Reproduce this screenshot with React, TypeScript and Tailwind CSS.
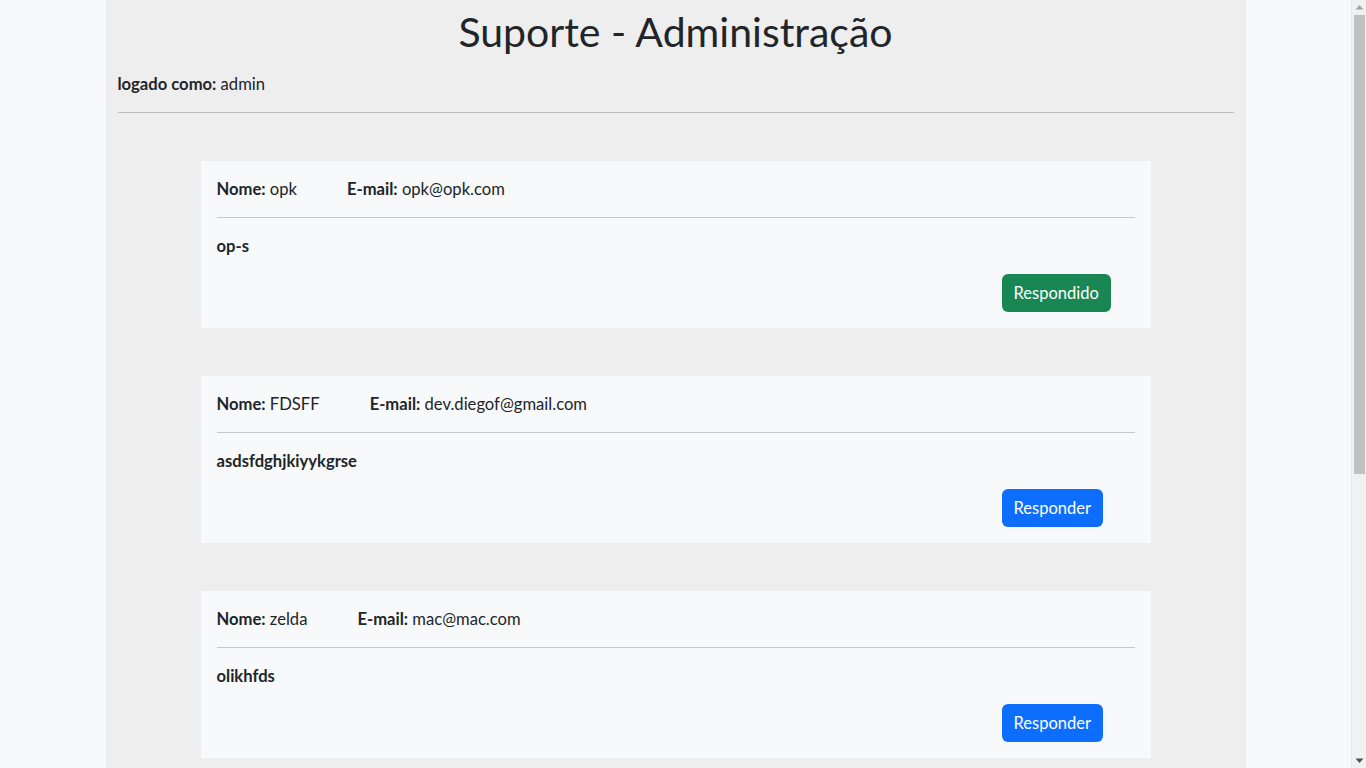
import React from "react";

type Ticket = { nome: string; email: string; msg: string; respondido: boolean };

const tickets: Ticket[] = [
  { nome: "opk", email: "opk@opk.com", msg: "op-s", respondido: true },
  { nome: "FDSFF", email: "dev.diegof@gmail.com", msg: "asdsfdghjkiyykgrse", respondido: false },
  { nome: "zelda", email: "mac@mac.com", msg: "olikhfds", respondido: false },
];

function Card({ t }: { t: Ticket }) {
  return (
    <div className="bg-[#f8f9fa] p-4 mb-12">
      <div className="flex gap-[50px] leading-6">
        <span>
          <b className="font-bold">Nome:</b> {t.nome}
        </span>
        <span>
          <b className="font-bold">E-mail:</b> {t.email}
        </span>
      </div>
      <div className="h-px bg-[#c6c7c8] my-4" />
      <p className="font-bold leading-6 mb-4">{t.msg}</p>
      <div className="flex">
        <div className="w-[785px]" />
        <button
          className={
            t.respondido
              ? "h-[38px] px-3 rounded-md bg-[#198754] text-white leading-6 text-[16.5px]"
              : "h-[38px] px-3 rounded-md bg-[#0d6efd] text-white leading-6 text-[16.5px]"
          }
        >
          {t.respondido ? "Respondido" : "Responder"}
        </button>
      </div>
    </div>
  );
}

function Scrollbar() {
  return (
    <div className="fixed top-0 right-0 w-[15px] h-screen bg-[#f1f1f1] border-l border-[#e8e8e8] flex flex-col items-center">
      <svg width="9" height="15" viewBox="0 0 9 15" className="shrink-0">
        <path d="M0.5 9.5 L4.5 5 L8.5 9.5 Z" fill="#a3a3a3" />
      </svg>
      <div className="w-[11px] h-[459px] bg-[#c1c1c1]" />
      <div className="flex-1" />
      <svg width="9" height="15" viewBox="0 0 9 15" className="shrink-0">
        <path d="M0.5 5.5 L4.5 10 L8.5 5.5 Z" fill="#505050" />
      </svg>
    </div>
  );
}

export default function App() {
  return (
    <div
      className="min-h-screen bg-[#f8f9fa] text-[#212529] text-[16.6px]"
      style={{ fontFamily: 'Lato, "Open Sans", sans-serif' }}
    >
      <div className="mr-[15px]">
        <div className="w-[1140px] mx-auto bg-[#eeeeee] px-3 pt-2 pb-1">
          <h1 className="text-[41px] leading-[48px] text-center mb-4">Suporte - Administração</h1>
          <p className="leading-6">
            <b className="font-bold">logado como:</b> admin
          </p>
          <div className="h-px bg-[#bdbdbd] mt-4 mb-12" />
          <div className="w-[950px] mx-auto">
            {tickets.map((t, i) => (
              <Card key={i} t={t} />
            ))}
          </div>
        </div>
      </div>
      <Scrollbar />
    </div>
  );
}
